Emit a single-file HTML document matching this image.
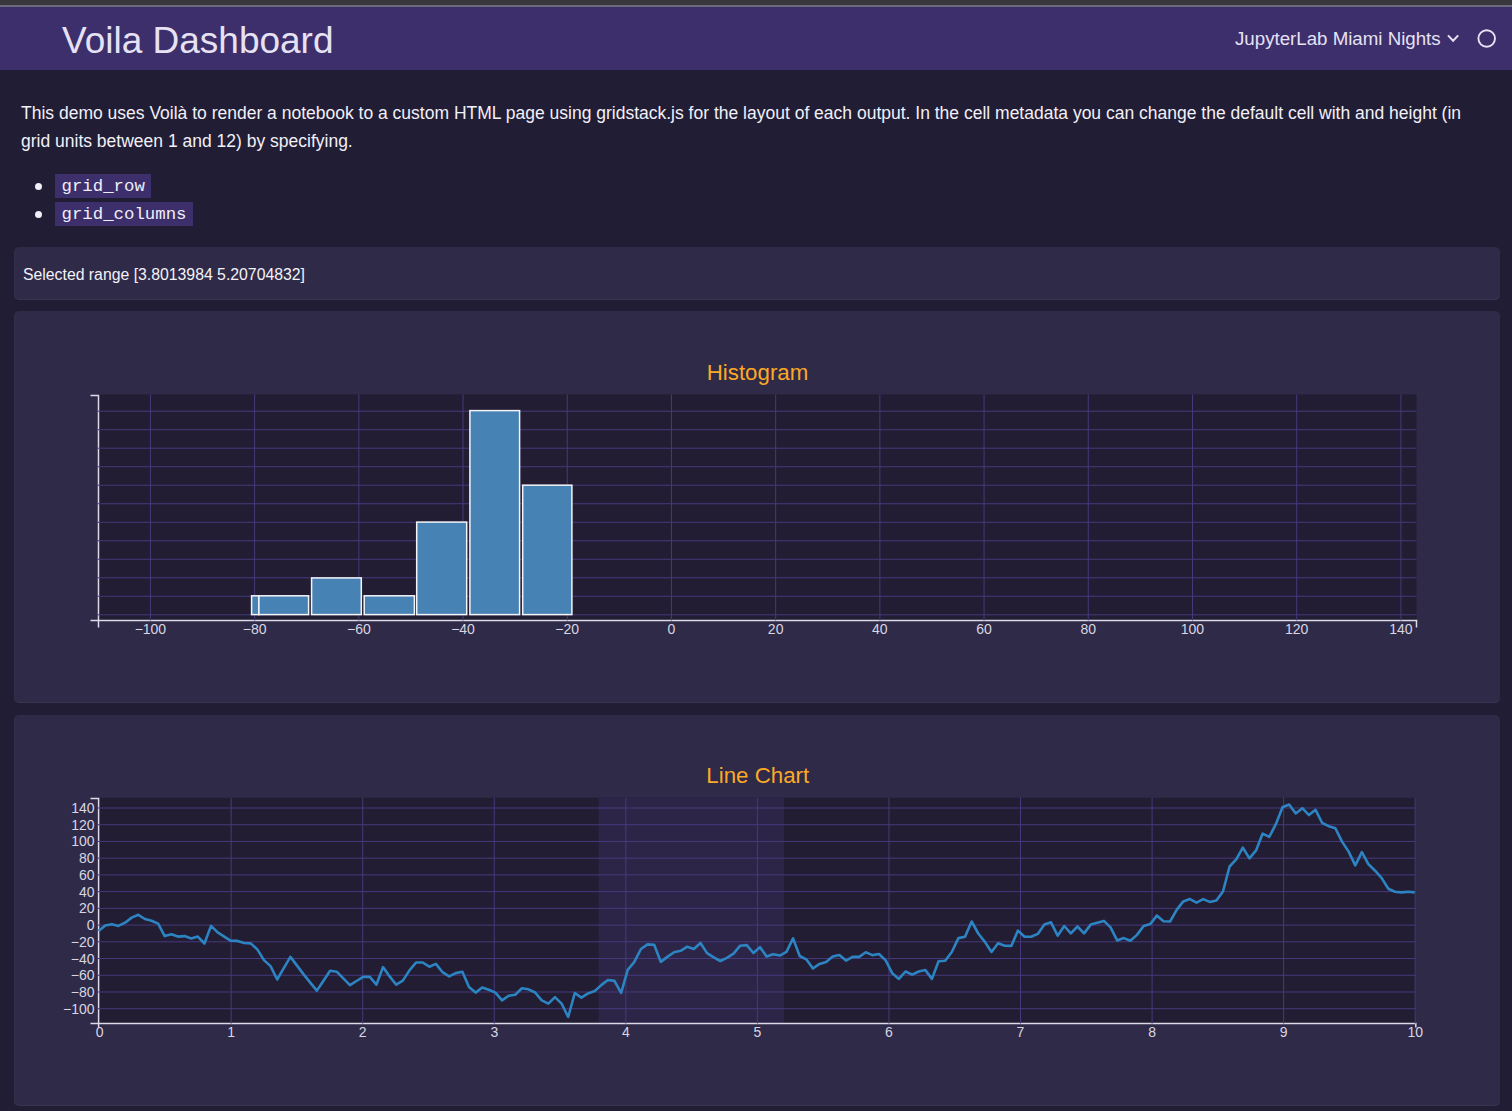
<!DOCTYPE html>
<html><head><meta charset="utf-8">
<style>
html,body{margin:0;padding:0;width:1512px;height:1111px;overflow:hidden;background:#211d34;font-family:"Liberation Sans",sans-serif;}
.abs{position:absolute;white-space:nowrap;}
#topbar{position:absolute;left:0;top:0;width:1512px;height:5px;background:#38383c;}
#topline{position:absolute;left:0;top:5px;width:1512px;height:2px;background:#6c687c;}
#header{position:absolute;left:0;top:7px;width:1512px;height:63px;background:#3c2f6b;}
#title{left:62px;top:16px;font-size:37px;color:#e6e2f4;line-height:50px;}
#theme{left:1235px;top:28px;font-size:18.7px;color:#e6e2f4;line-height:22px;}
.p{left:21px;font-size:17.5px;color:#f2f0f8;line-height:28px;}
.bullet{position:absolute;width:7px;height:7px;border-radius:50%;background:#f0eef6;}
.code{position:absolute;background:#3c2f6b;color:#f0eef6;font-family:"Liberation Mono",monospace;font-size:17.36px;line-height:23.5px;padding:0 6.5px;}
.card{position:absolute;left:14px;width:1486px;background:#2f2a48;border-radius:5px;box-shadow:inset 0 -1px 0 rgba(255,255,255,0.05), inset 1px 0 0 rgba(255,255,255,0.02);}
#sel{left:23px;top:266px;font-size:15.8px;color:#f4f2f8;line-height:18px;}

</style></head><body>
<div id="topbar"></div><div id="topline"></div>
<div id="header"></div>
<div class="abs" id="title">Voila Dashboard</div>
<div class="abs" id="theme">JupyterLab Miami Nights</div>
<div class="abs p" style="top:99px">This demo uses Voilà to render a notebook to a custom HTML page using gridstack.js for the layout of each output. In the cell metadata you can change the default cell with and height (in</div>
<div class="abs p" style="top:127px">grid units between 1 and 12) by specifying.</div>
<div class="bullet" style="left:35px;top:183px"></div>
<div class="bullet" style="left:35px;top:211px"></div>
<div class="code" style="left:55px;top:174px"><span style="position:relative;top:1px">grid_row</span></div>
<div class="code" style="left:55px;top:202px"><span style="position:relative;top:1px">grid_columns</span></div>
<div class="card" style="top:247px;height:53px"></div>
<div class="abs" id="sel">Selected range [3.8013984 5.20704832]</div>
<div class="card" style="top:311px;height:392px"></div>
<div class="card" style="top:715px;height:391px"></div>
<svg id="charts" width="1512" height="1111" viewBox="0 0 1512 1111" style="position:absolute;left:0;top:0">
<rect x="98.5" y="394.5" width="1318.0" height="226.0" fill="#221d33"/>
<path d="M90.5,395.5H98.5V620.5H90.5M98.5,627.5V620.5H1416.5V627.5" stroke="#dcdae8" stroke-width="1.5" fill="none"/>
<path d="M150.41,394.5V620.5M254.62,394.5V620.5M358.83,394.5V620.5M463.03,394.5V620.5M567.24,394.5V620.5M671.45,394.5V620.5M775.66,394.5V620.5M879.87,394.5V620.5M984.07,394.5V620.5M1088.28,394.5V620.5M1192.49,394.5V620.5M1296.70,394.5V620.5M1400.91,394.5V620.5M97.6,614.80H1416.5M97.6,596.29H1416.5M97.6,577.78H1416.5M97.6,559.27H1416.5M97.6,540.76H1416.5M97.6,522.25H1416.5M97.6,503.74H1416.5M97.6,485.23H1416.5M97.6,466.72H1416.5M97.6,448.21H1416.5M97.6,429.70H1416.5M97.6,411.19H1416.5" stroke="#463a7c" stroke-width="1" fill="none"/>
<rect x="251.6" y="595.8" width="7.30" height="18.80" fill="#4682b4" stroke="#f4f4f8" stroke-width="1.5"/>
<rect x="258.9" y="595.8" width="49.70" height="18.80" fill="#4682b4" stroke="#f4f4f8" stroke-width="1.5"/>
<rect x="311.6" y="577.9" width="49.70" height="36.70" fill="#4682b4" stroke="#f4f4f8" stroke-width="1.5"/>
<rect x="364.2" y="595.8" width="50.20" height="18.80" fill="#4682b4" stroke="#f4f4f8" stroke-width="1.5"/>
<rect x="416.7" y="522.1" width="50.00" height="92.50" fill="#4682b4" stroke="#f4f4f8" stroke-width="1.5"/>
<rect x="469.9" y="410.6" width="49.70" height="204.00" fill="#4682b4" stroke="#f4f4f8" stroke-width="1.5"/>
<rect x="522.7" y="485.2" width="49.20" height="129.40" fill="#4682b4" stroke="#f4f4f8" stroke-width="1.5"/>
<g font-family="Liberation Sans" font-size="14" fill="#d8d6e2" text-anchor="middle"><text x="150.41" y="634.3">−100</text><text x="254.62" y="634.3">−80</text><text x="358.83" y="634.3">−60</text><text x="463.03" y="634.3">−40</text><text x="567.24" y="634.3">−20</text><text x="671.45" y="634.3">0</text><text x="775.66" y="634.3">20</text><text x="879.87" y="634.3">40</text><text x="984.07" y="634.3">60</text><text x="1088.28" y="634.3">80</text><text x="1192.49" y="634.3">100</text><text x="1296.70" y="634.3">120</text><text x="1400.91" y="634.3">140</text></g>
<text x="757.5" y="380" font-family="Liberation Sans" font-size="22.3" fill="#fba927" text-anchor="middle">Histogram</text>
<rect x="98.6" y="797.8" width="1317.20" height="225.80" fill="#221d33"/>
<rect x="598.5" y="797.8" width="185.5" height="225.80" fill="#2c2548"/>
<path d="M90.5,798.5H98.6V1023.6H90.5M98.6,1027.5V1023.6H1415.8V1027.5" stroke="#dcdae8" stroke-width="1.5" fill="none"/>
<path d="M231.16,797.8V1023.6M362.72,797.8V1023.6M494.28,797.8V1023.6M625.84,797.8V1023.6M757.40,797.8V1023.6M888.96,797.8V1023.6M1020.52,797.8V1023.6M1152.08,797.8V1023.6M1283.64,797.8V1023.6M1415.20,797.8V1023.6M97.7,808.00H1415.8M97.7,824.73H1415.8M97.7,841.45H1415.8M97.7,858.17H1415.8M97.7,874.90H1415.8M97.7,891.62H1415.8M97.7,908.35H1415.8M97.7,925.08H1415.8M97.7,941.80H1415.8M97.7,958.52H1415.8M97.7,975.25H1415.8M97.7,991.98H1415.8M97.7,1008.70H1415.8" stroke="#463a7c" stroke-width="1" fill="none"/>
<polyline points="98.60,931.00 105.21,925.50 111.83,924.30 118.44,925.90 125.06,922.70 131.67,917.60 138.28,914.80 144.90,919.00 151.51,920.80 158.13,923.60 164.74,936.10 171.35,934.30 177.97,936.60 184.58,936.10 191.20,938.40 197.81,936.60 204.42,943.50 211.04,925.90 217.65,932.40 224.27,936.60 230.88,940.80 237.49,940.90 244.11,943.00 250.72,943.40 257.34,949.40 263.95,960.10 270.56,966.10 277.18,979.50 283.79,968.20 290.41,956.90 297.02,965.60 303.63,974.40 310.25,982.60 316.86,990.60 323.48,980.70 330.09,970.70 336.70,971.70 343.32,978.30 349.93,985.10 356.55,981.00 363.16,976.90 369.77,976.90 376.39,984.70 383.00,967.10 389.62,976.40 396.23,984.70 402.84,980.60 409.46,970.40 416.07,962.50 422.69,962.50 429.30,966.70 435.91,963.90 442.53,972.20 449.14,976.40 455.76,973.10 462.37,971.80 468.98,987.00 475.60,992.60 482.21,987.50 488.83,989.80 495.44,992.60 502.05,1000.40 508.67,995.70 515.28,994.80 521.90,988.30 528.51,989.30 535.12,992.50 541.74,1000.40 548.35,1003.60 554.97,997.10 561.58,1003.60 568.19,1017.00 574.81,993.00 581.42,997.60 588.04,993.40 594.65,991.10 601.26,985.10 607.88,980.00 614.49,980.90 621.11,993.00 627.72,969.80 634.33,961.90 640.95,949.00 647.56,944.40 654.18,944.80 660.79,961.90 667.40,956.90 674.02,952.20 680.63,950.80 687.25,946.70 693.86,949.00 700.47,943.00 707.09,953.10 713.70,957.30 720.32,961.00 726.93,957.80 733.54,953.60 740.16,945.70 746.77,945.10 753.39,953.00 760.00,947.20 766.61,956.50 773.23,954.20 779.84,955.60 786.46,951.90 793.07,938.40 799.68,956.00 806.30,959.30 812.91,968.50 819.53,963.90 826.14,962.00 832.75,956.50 839.37,955.10 845.98,960.60 852.60,956.90 859.21,956.90 865.82,952.30 872.44,955.10 879.05,954.00 885.67,960.40 892.28,973.30 898.89,978.90 905.51,971.50 912.12,974.70 918.74,971.50 925.35,970.10 931.96,978.90 938.58,961.30 945.19,960.80 951.81,952.00 958.42,938.10 965.03,936.80 971.65,921.50 978.26,933.50 984.88,941.90 991.49,952.00 998.10,943.20 1004.72,945.80 1011.33,945.90 1017.95,930.60 1024.56,936.70 1031.17,936.70 1037.79,933.90 1044.40,924.60 1051.02,922.30 1057.63,935.70 1064.24,926.00 1070.86,933.40 1077.47,926.50 1084.09,933.40 1090.70,924.60 1097.31,922.80 1103.93,920.90 1110.54,927.40 1117.16,940.40 1123.77,938.10 1130.38,940.80 1137.00,934.90 1143.61,926.00 1150.23,924.10 1156.84,915.60 1163.45,921.30 1170.07,921.50 1176.68,909.90 1183.30,901.40 1189.91,899.10 1196.52,902.60 1203.14,899.10 1209.75,901.90 1216.37,900.50 1222.98,891.50 1229.59,866.50 1236.21,859.40 1242.82,847.60 1249.44,858.40 1256.05,850.40 1262.66,833.60 1269.28,836.80 1275.89,824.10 1282.51,807.20 1289.12,804.50 1295.73,813.50 1302.35,808.20 1308.96,815.10 1315.58,809.80 1322.19,823.00 1328.80,826.20 1335.42,828.30 1342.03,841.60 1348.65,851.60 1355.26,865.40 1361.87,852.10 1368.49,864.30 1375.10,870.70 1381.72,878.10 1388.33,888.70 1394.94,891.80 1401.56,892.40 1408.17,891.80 1414.79,892.40" fill="none" stroke="#2c84c2" stroke-width="2.6" stroke-linejoin="round"/>
<g font-family="Liberation Sans" font-size="14" fill="#d8d6e2" text-anchor="end"><text x="94.5" y="813.00">140</text><text x="94.5" y="829.73">120</text><text x="94.5" y="846.45">100</text><text x="94.5" y="863.17">80</text><text x="94.5" y="879.90">60</text><text x="94.5" y="896.62">40</text><text x="94.5" y="913.35">20</text><text x="94.5" y="930.08">0</text><text x="94.5" y="946.80">−20</text><text x="94.5" y="963.52">−40</text><text x="94.5" y="980.25">−60</text><text x="94.5" y="996.98">−80</text><text x="94.5" y="1013.70">−100</text></g>
<g font-family="Liberation Sans" font-size="14" fill="#d8d6e2" text-anchor="middle"><text x="99.60" y="1037">0</text><text x="231.16" y="1037">1</text><text x="362.72" y="1037">2</text><text x="494.28" y="1037">3</text><text x="625.84" y="1037">4</text><text x="757.40" y="1037">5</text><text x="888.96" y="1037">6</text><text x="1020.52" y="1037">7</text><text x="1152.08" y="1037">8</text><text x="1283.64" y="1037">9</text><text x="1415.20" y="1037">10</text></g>
<text x="757.8" y="783" font-family="Liberation Sans" font-size="22.3" fill="#fba927" text-anchor="middle">Line Chart</text>
<path d="M1448,35.4L1453.1,40.7L1458.2,35.4" fill="none" stroke="#e6e2f4" stroke-width="2"/>
<circle cx="1486.7" cy="38.5" r="8.3" fill="none" stroke="#e6e2f4" stroke-width="1.9"/>
</svg>
</body></html>
